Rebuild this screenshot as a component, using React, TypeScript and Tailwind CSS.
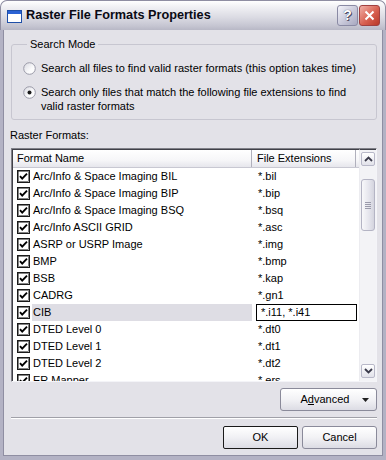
import React from "react";

const rows: [string, string][] = [
  ["Arc/Info & Space Imaging BIL", "*.bil"],
  ["Arc/Info & Space Imaging BIP", "*.bip"],
  ["Arc/Info & Space Imaging BSQ", "*.bsq"],
  ["Arc/Info ASCII GRID", "*.asc"],
  ["ASRP or USRP Image", "*.img"],
  ["BMP", "*.bmp"],
  ["BSB", "*.kap"],
  ["CADRG", "*.gn1"],
  ["CIB", "*.i11, *.i41"],
  ["DTED Level 0", "*.dt0"],
  ["DTED Level 1", "*.dt1"],
  ["DTED Level 2", "*.dt2"],
  ["ER Mapper", "*.ers"],
];

function Check() {
  return (
    <svg width="13" height="13" viewBox="0 0 13 13" className="shrink-0">
      <rect x="0.5" y="0.5" width="12" height="12" fill="#fff" stroke="#1a1a1a" />
      <rect x="1.5" y="1.5" width="10" height="10" fill="none" stroke="#333" strokeWidth="0.6" />
      <path d="M3 6.2 L5.2 8.6 L10 3.6" fill="none" stroke="#000" strokeWidth="1.9" />
    </svg>
  );
}

function Radio({ on }: { on?: boolean }) {
  return (
    <svg width="13" height="13" viewBox="0 0 13 13" className="shrink-0">
      <defs>
        <linearGradient id={on ? "rg1" : "rg0"} x1="0" y1="0" x2="1" y2="1">
          <stop offset="0" stopColor="#d8d8e0" />
          <stop offset="0.6" stopColor="#fbfbfc" />
          <stop offset="1" stopColor="#ffffff" />
        </linearGradient>
      </defs>
      <circle cx="6.5" cy="6.5" r="5.8" fill={`url(#${on ? "rg1" : "rg0"})`} stroke="#9a9aa8" strokeWidth="1" />
      {on && <circle cx="6.5" cy="6.5" r="2" fill="#1a1a1a" />}
    </svg>
  );
}

function Chevron({ up }: { up?: boolean }) {
  return (
    <svg width="9" height="6" viewBox="0 0 9 6">
      <path d={up ? "M1 5 L4.5 1.5 L8 5" : "M1 1 L4.5 4.5 L8 1"} fill="none" stroke="#3a3a4a" strokeWidth="1.8" />
    </svg>
  );
}

export default function App() {
  return (
    <div className="w-[386px] h-[460px] bg-white font-['Liberation_Sans',Arial,sans-serif] text-[11px] text-black select-none">
      <div className="w-[386px] h-[460px] flex flex-col rounded-t-[7px] bg-[#b3b2c4] overflow-hidden">
        {/* Title bar */}
        <div className="h-[30px] shrink-0 flex items-center pl-[6px] pr-[5px] rounded-t-[7px] border border-b-0 border-[#8f8ea2] bg-[linear-gradient(to_bottom,#ffffff_0%,#f1f1f4_20%,#dcdce4_55%,#c6c6d2_85%,#b8b8c6_100%)]">
          <svg width="15" height="13" viewBox="0 0 15 13" className="shrink-0 mt-[1px]">
            <rect x="0.5" y="0.5" width="14" height="12" fill="#ffffff" stroke="#1f4fa8" />
            <rect x="1" y="1" width="13" height="3" fill="#2b62d4" />
          </svg>
          <span className="ml-[4px] text-[12.7px] font-bold text-[#0a0a14] mt-[1px]">Raster File Formats Properties</span>
          <div className="ml-auto flex gap-[1px]">
            <div className="w-[21px] h-[21px] rounded-[3px] border border-[#8a8aa4] bg-[linear-gradient(135deg,#f4f4fa,#c4c4d6_60%,#a8a8c0)] flex items-center justify-center text-[14px] font-bold text-[#ffffff] [text-shadow:0_0_1px_#30304a,1px_1px_0_#50506a]">?</div>
            <div className="w-[21px] h-[21px] rounded-[3px] border border-[#a04040] bg-[linear-gradient(135deg,#f0b0a8,#d86050_55%,#b83828)] flex items-center justify-center">
              <svg width="11" height="11" viewBox="0 0 11 11">
                <path d="M1.5 1.5 L9.5 9.5 M9.5 1.5 L1.5 9.5" stroke="#ffffff" strokeWidth="2" />
              </svg>
            </div>
          </div>
        </div>

        {/* Body */}
        <div className="flex-1 flex flex-col mx-[3px] mb-[4px] border-l border-r border-b border-[#8f8ea2] bg-[#e3e2e8] pl-[7px] pr-[5px] pt-[8px]">
          <fieldset className="border border-[#c7c6d0] rounded-[3px] pl-[11px] pr-[6px] pb-[6px] min-w-0">
            <legend className="ml-[4px] px-[3px] leading-[13px]">Search Mode</legend>
            <div className="mt-[10px] flex items-center h-[14px] gap-[5px]">
              <Radio />
              <span className="leading-[14px]">Search all files to find valid raster formats (this option takes time)</span>
            </div>
            <div className="mt-[10px] flex items-start gap-[5px]">
              <div className="mt-[1px]"><Radio on /></div>
              <span className="leading-[14px]">Search only files that match the following file extensions to find<br />valid raster formats</span>
            </div>
          </fieldset>

          <div className="mt-[8px] leading-[14px] ml-[-1px]">Raster Formats:</div>

          {/* List view */}
          <div className="mt-[6px] h-[234px] border border-[#808088] border-r-[#f4f4f8] border-b-[#f4f4f8] bg-white flex overflow-hidden">
            <div className="flex-1 flex flex-col min-w-0 border-l border-t border-[#404048]">
              <div className="h-[18px] shrink-0 flex bg-[linear-gradient(to_bottom,#ffffff,#f6f6f8_60%,#e6e6ec)] border-b border-[#c8c8d2]">
                <div className="w-[239px] pl-[4px] flex items-center border-r border-[#b0b0bc]">Format Name</div>
                <div className="w-[104px] pl-[5px] flex items-center border-r border-[#b0b0bc]">File Extensions</div>
                <div className="flex-1" />
              </div>
              {rows.map(([name, ext]) => {
                const sel = name === "CIB";
                return (
                  <div key={name} className="h-[17px] shrink-0 flex items-center">
                    <div className="w-[239px] flex items-center h-full">
                      <div className="pl-[4px] pr-[2px] flex items-center"><Check /></div>
                      <div className={`flex-1 h-full flex items-center pl-[1px] ${sel ? "bg-[#dedde4]" : ""}`}>{name}</div>
                    </div>
                    <div className="w-[105px] h-full flex items-center">
                      {sel ? (
                        <div className="ml-[4px] w-[101px] h-[17px] border border-black flex items-center pl-[4px] bg-white">{ext}</div>
                      ) : (
                        <span className="pl-[6px]">{ext}</span>
                      )}
                    </div>
                  </div>
                );
              })}
            </div>
            {/* Scrollbar */}
            <div className="w-[17px] shrink-0 flex flex-col bg-[#f3f3f6] border-l border-[#ececf0] pt-[2px] pb-[3px] border-t border-t-[#404048]">
              <div className="h-[14px] mx-[1px] rounded-[2px] border border-[#b8b8c8] bg-[linear-gradient(to_bottom,#ffffff,#e2e2ea)] flex items-center justify-center">
                <Chevron up />
              </div>
              <div className="mt-[13px] h-[52px] mx-[1px] rounded-[3px] border border-[#b4b4c4] bg-[linear-gradient(to_right,#f8f8fa,#e4e4ec_60%,#d4d4de)] flex flex-col items-center justify-center gap-[1px]">
                <div className="w-[6px] h-[1px] bg-[#9a9aaa]" />
                <div className="w-[6px] h-[1px] bg-[#9a9aaa]" />
                <div className="w-[6px] h-[1px] bg-[#9a9aaa]" />
                <div className="w-[6px] h-[1px] bg-[#9a9aaa]" />
              </div>
              <div className="flex-1" />
              <div className="h-[14px] mx-[1px] rounded-[2px] border border-[#b8b8c8] bg-[linear-gradient(to_bottom,#ffffff,#e2e2ea)] flex items-center justify-center">
                <Chevron />
              </div>
            </div>
          </div>

          {/* Advanced */}
          <div className="mt-[6px] flex justify-end">
            <div className="w-[97px] h-[23px] rounded-[3px] border border-[#8a8a9a] bg-[linear-gradient(to_bottom,#ffffff,#f2f2f5_50%,#dcdce4)] flex items-center">
              <span className="flex-1 text-center pl-[10px]">A<span className="underline">d</span>vanced</span>
              <svg width="7" height="4" viewBox="0 0 7 4" className="mr-[7px] ml-[3px]">
                <path d="M0 0 L7 0 L3.5 4 Z" fill="#202020" />
              </svg>
            </div>
          </div>

          {/* Separator */}
          <div className="mt-[6px] h-[2px] border-t border-[#a0a0a8] border-b border-b-white" />

          {/* OK / Cancel */}
          <div className="mt-[7px] flex justify-end gap-[4px]">
            <div className="w-[75px] h-[23px] rounded-[2px] border border-[#1a1a1a] bg-[linear-gradient(to_bottom,#ffffff,#f0f0f4_50%,#dcdce4)] flex items-center justify-center">OK</div>
            <div className="w-[75px] h-[23px] rounded-[3px] border border-[#8a8a9a] bg-[linear-gradient(to_bottom,#ffffff,#f2f2f5_50%,#dcdce4)] flex items-center justify-center">Cancel</div>
          </div>
        </div>
      </div>
    </div>
  );
}
